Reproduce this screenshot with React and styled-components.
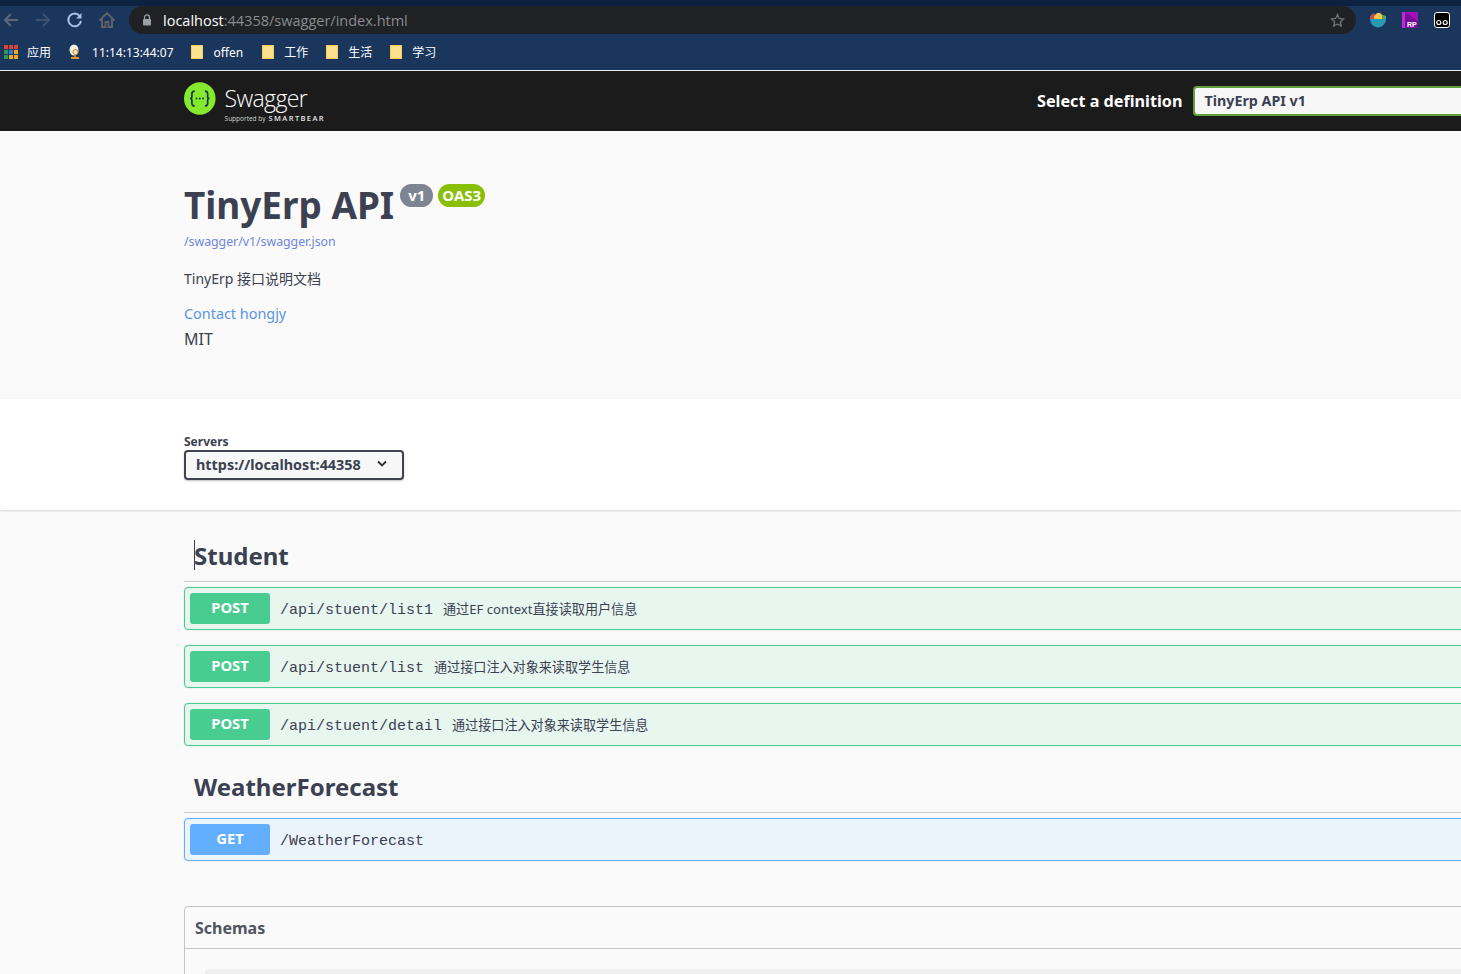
import React from 'react';
import styled, { createGlobalStyle } from 'styled-components';

const sans = '"Noto Sans", "Noto Sans CJK SC", sans-serif';

const GlobalStyle = createGlobalStyle`
  html, body {
    margin: 0;
    padding: 0;
    background: #fafafa;
  }
  body {
    width: 1461px;
    height: 974px;
    overflow: hidden;
    font-family: ${sans};
    color: #3b4151;
  }
`;

const Page = styled.div`
  width: 1461px;
  height: 974px;
  overflow: hidden;
  display: flex;
  flex-direction: column;
`;

const TabStrip = styled.div`
  height: 6px;
  background: #0d2240;
  flex: none;
`;

const Toolbar = styled.div`
  height: 28px;
  padding: 0 5px 0 0;
  background: #1a365d;
  display: flex;
  align-items: center;
  flex: none;
`;

const NavIcons = styled.div`
  width: 129px;
  height: 28px;
  display: flex;
  align-items: center;
  justify-content: space-between;
  padding: 0 13px 0 2px;
  box-sizing: border-box;
  flex: none;
`;

const AddressBar = styled.div`
  width: 1227px;
  height: 28px;
  border-radius: 14px;
  background: #202124;
  display: flex;
  align-items: center;
  padding: 0 11px 0 13px;
  box-sizing: border-box;
  flex: none;
`;

const Url = styled.div`
  margin-left: 11px;
  flex: 1;
  font-family: "Open Sans", sans-serif;
  font-size: 14.5px;
  color: #8a8c90;
  white-space: nowrap;
`;

const UrlHost = styled.span`
  color: #fff;
`;

const Extensions = styled.div`
  display: flex;
  align-items: center;
  gap: 16px;
  margin-left: 14px;
`;

const Bookmarks = styled.div`
  height: 36px;
  background: #1a365d;
  display: flex;
  align-items: center;
  padding-left: 4px;
  flex: none;
  border-bottom: 1px solid #e8eaed;
`;

const Bookmark = styled.div`
  display: flex;
  align-items: center;
  gap: ${p => p.$gap}px;
  margin-right: ${p => p.$after}px;
  font-family: "Noto Sans", "Noto Sans CJK SC", sans-serif;
  font-size: 12px;
  color: #fff;
  white-space: nowrap;
`;

const TopBar = styled.header`
  height: 60px;
  background: #1b1b1b;
  display: flex;
  align-items: center;
  padding-left: 184px;
  flex: none;
`;

const Logo = styled.div`
  width: 141px;
  height: 40px;
  display: flex;
  align-items: flex-start;
  gap: 9px;
  flex: none;
`;

const LogoWords = styled.div`
  display: flex;
  flex-direction: column;
  color: #fff;
  margin-top: 2px;
`;

const LogoName = styled.div`
  font-family: "Open Sans", sans-serif;
  font-weight: 300;
  font-size: 23px;
  line-height: 31px;
  letter-spacing: -0.6px;
`;

const LogoBy = styled.div`
  display: flex;
  align-items: baseline;
  gap: 3px;
  font-family: "Open Sans", sans-serif;
  font-size: 6.5px;
  line-height: 9px;
  color: #d8d8d8;
  white-space: nowrap;
`;

const LogoBrand = styled.span`
  font-size: 7.5px;
  font-weight: 600;
  letter-spacing: 1.4px;
  color: #e8e8e8;
`;

const DefinitionPicker = styled.div`
  margin-left: 712px;
  display: flex;
  align-items: center;
  flex: none;
`;

const PickerLabel = styled.span`
  font-size: 16.2px;
  font-weight: 700;
  color: #fff;
  margin-right: 11px;
  white-space: nowrap;
`;

const PickerBox = styled.div`
  width: 400px;
  height: 30px;
  box-sizing: border-box;
  border: 2px solid #62a03f;
  border-radius: 4px;
  background: #f7f7f7;
  padding-left: 9px;
  font-size: 14.3px;
  font-weight: 700;
  line-height: 25px;
  color: #3b4151;
  white-space: nowrap;
`;

const InfoSection = styled.section`
  height: 268px;
  box-sizing: border-box;
  padding: 47px 0 0 184px;
  background: #fafafa;
  flex: none;
`;

const TitleRow = styled.div`
  display: flex;
  align-items: flex-start;
  height: 56px;
`;

const Title = styled.h2`
  margin: 0;
  font-size: 36.9px;
  line-height: 54px;
  font-weight: 700;
  color: #3b4151;
`;

const Badge = styled.span`
  margin: 6px 0 0 ${p => p.$left}px;
  height: 23px;
  padding: 0 ${p => p.$pad}px;
  border-radius: 12px;
  background: ${p => p.$color};
  color: #fff;
  font-size: 15px;
  font-weight: 700;
  line-height: 23px;
`;

const SpecLink = styled.a`
  display: block;
  margin-top: -1px;
  font-size: 12.3px;
  line-height: 17px;
  color: #6f86e0;
`;

const Description = styled.p`
  margin: 19px 0 0;
  font-size: 14px;
  line-height: 20px;
  color: #3b4151;
`;

const ContactLink = styled.a`
  display: block;
  margin-top: 15px;
  font-size: 14.4px;
  line-height: 20px;
  color: #5a94e8;
`;

const License = styled.div`
  margin-top: 4px;
  font-size: 16px;
  line-height: 22px;
  color: #3b4151;
`;

const ServersSection = styled.section`
  height: 111px;
  box-sizing: border-box;
  background: #fff;
  padding: 34px 0 0 184px;
  box-shadow: 0 1px 2px rgba(0, 0, 0, 0.15);
  position: relative;
  flex: none;
`;

const ServersLabel = styled.div`
  font-size: 12px;
  font-weight: 700;
  line-height: 17px;
  color: #3b4151;
`;

const ServerSelect = styled.div`
  width: 220px;
  height: 30px;
  box-sizing: border-box;
  border: 2px solid #41444e;
  border-radius: 4px;
  background: #f7f7f7;
  box-shadow: 0 1px 2px rgba(0, 0, 0, 0.25);
  display: flex;
  align-items: center;
  justify-content: space-between;
  padding: 0 14px 2px 10px;
  font-size: 14.4px;
  font-weight: 700;
  color: #3b4151;
`;

const Content = styled.main`
  padding: 24px 0 0 184px;
  width: 1500px;
`;

const TagHeader = styled.h3`
  position: relative;
  margin: 0 0 5px;
  height: 48px;
  box-sizing: border-box;
  border-bottom: 1px solid #c9cbce;
  padding: 0 0 0 10px;
  font-size: 24px;
  font-weight: 700;
  line-height: 44px;
  color: #3b4151;
`;

const Caret = styled.span`
  position: absolute;
  left: 10px;
  top: 6px;
  width: 1px;
  height: 30px;
  background: #3b4151;
`;

const OpBlock = styled.div`
  height: 43px;
  box-sizing: border-box;
  border: 1px solid ${p => p.$border};
  border-radius: 4px;
  background: ${p => p.$bg};
  display: flex;
  align-items: center;
  padding-left: 5px;
  margin-bottom: 15px;
  box-shadow: 0 0 2px rgba(0, 0, 0, 0.12);
`;

const Method = styled.span`
  width: 80px;
  height: 31px;
  border-radius: 3px;
  background: ${p => p.$color};
  color: #fff;
  font-size: 14.8px;
  font-weight: 700;
  line-height: 28px;
  text-align: center;
  flex: none;
`;

const OpPath = styled.span`
  margin-left: 10px;
  padding-top: 4px;
  font-family: "Liberation Mono", monospace;
  font-size: 15px;
  color: #3b4151;
  white-space: nowrap;
`;

const OpSummary = styled.span`
  margin-left: 10px;
  font-size: 13.1px;
  color: #3b4151;
  white-space: nowrap;
`;

const TagGap = styled.div`
  height: ${p => p.$h}px;
`;

const SchemasPanel = styled.section`
  height: 120px;
  box-sizing: border-box;
  border: 1px solid #c4c5c8;
  border-radius: 4px;
`;

const SchemasHeader = styled.div`
  height: 42px;
  box-sizing: border-box;
  padding-left: 10px;
  border-bottom: 1px solid #c4c5c8;
  font-size: 16px;
  font-weight: 700;
  line-height: 42px;
  color: #505460;
`;

const SchemaRow = styled.div`
  margin: 20px 0 0 20px;
  height: 40px;
  border-radius: 4px;
  background: #eeeeee;
`;

const BackIcon = () => (
  <svg width="18" height="18" viewBox="0 0 18 18" fill="none" stroke="#5f6873" strokeWidth="2">
    <path d="M16 9H3M9 3L3 9l6 6" />
  </svg>
);

const ForwardIcon = () => (
  <svg width="18" height="18" viewBox="0 0 18 18" fill="none" stroke="#3f5270" strokeWidth="2">
    <path d="M2 9h13M9 3l6 6-6 6" />
  </svg>
);

const ReloadIcon = () => (
  <svg width="18" height="18" viewBox="0 0 18 18" fill="none">
    <path d="M14 5.200A6.400 6.400 0 1 0 15 10" stroke="#a9c1e6" strokeWidth="2" />
    <path d="M15.500 2v5.400h-5.400z" fill="#a9c1e6" />
  </svg>
);

const HomeIcon = () => (
  <svg width="18" height="18" viewBox="0 0 18 18" fill="none" stroke="#5f6368" strokeWidth="1.800">
    <path d="M1.500 9.500L9 2l7.500 7.500M4 8v8h3.500v-5h3v5H14V8" />
  </svg>
);

const LockIcon = () => (
  <svg width="10" height="12" viewBox="0 0 10 12">
    <path d="M2.500 5V3.400a2.500 2.500 0 0 1 5 0V5" fill="none" stroke="#9aa0a6" strokeWidth="1.300" />
    <rect x="1" y="5" width="8" height="6.500" rx="1" fill="#9aa0a6" />
  </svg>
);

const StarIcon = () => (
  <svg width="15" height="15" viewBox="0 0 24 24" fill="none" stroke="#6f7276" strokeWidth="2.200">
    <path d="M12 2.500l2.900 6.200 6.800.8-5 4.600 1.300 6.700L12 17.500l-6 3.300 1.300-6.700-5-4.600 6.800-.8z" />
  </svg>
);

const PieExtension = () => (
  <svg width="16" height="16" viewBox="0 0 16 16">
    <path d="M0 7h16a8 8.500 0 0 1-16 0z" fill="#2b9ab0" />
    <path d="M0 7V4l4-3 3 6z" fill="#c0504d" />
    <path d="M4 7a4.500 6 0 0 1 8-4l1 4z" fill="#f2c94c" />
    <path d="M12 2.400L16 4v3h-4z" fill="#57a55a" />
  </svg>
);

const RpExtension = () => (
  <svg width="16" height="16" viewBox="0 0 16 16">
    <rect width="16" height="16" fill="#a312b8" />
    <rect width="3" height="16" fill="#c02ad6" />
    <path d="M3 0l13 9v7H3z" fill="#7a0c9c" />
    <text x="5" y="14.500" fontSize="7" fontWeight="700" fill="#fff" fontFamily="Liberation Sans, sans-serif">RP</text>
  </svg>
);

const GlassesExtension = () => (
  <svg width="16" height="16" viewBox="0 0 16 16">
    <rect x="0.500" y="0.500" width="15" height="15" rx="2.500" fill="#000" stroke="#fff" />
    <circle cx="4.800" cy="10.500" r="2" fill="none" stroke="#fff" strokeWidth="1.200" />
    <circle cx="11.200" cy="10.500" r="2" fill="none" stroke="#fff" strokeWidth="1.200" />
  </svg>
);

const AppsIcon = () => {
  const colors = ['#dc4437', '#dc4437', '#dc4437', '#2e9a58', '#2f7fd6', '#f4a81c', '#2e9a58', '#f4a81c', '#f4a81c'];
  return (
    <svg width="14" height="14" viewBox="0 0 14 14">
      {colors.map((c, i) => (
        <rect key={i} x={(i % 3) * 5} y={Math.floor(i / 3) * 5} width="4" height="4" fill={c} />
      ))}
    </svg>
  );
};

const EggIcon = () => (
  <svg width="14" height="16" viewBox="0 0 14 16">
    <ellipse cx="6" cy="6" rx="4.500" ry="5.500" fill="#f0ece2" />
    <circle cx="7.500" cy="8" r="2.600" fill="#f3e3bf" stroke="#c98a2c" strokeWidth="1" />
    <path d="M7 9.500l-1 3.500h2z" fill="#d9952f" />
    <rect x="3" y="13" width="8" height="2" fill="#e0982a" />
  </svg>
);

const FolderIcon = () => (
  <svg width="12" height="14" viewBox="0 0 12 14">
    <path d="M0 0h12v14H0z" fill="#fbe08e" />
    <path d="M0 0h12v14H0z" fill="none" stroke="#f5c84c" strokeWidth="1.400" />
  </svg>
);

const SwaggerMark = () => (
  <svg width="34" height="35" viewBox="0 0 34 35">
    <ellipse cx="17" cy="17.500" rx="17" ry="17.500" fill="#85ea2d" />
    <path
      d="M11.500 9.500c-2.500 0-3 1-3 3v3c0 1.400-.8 2-2 2 1.200 0 2 .6 2 2v3c0 2 .5 3 3 3M22.500 9.500c2.500 0 3 1 3 3v3c0 1.400.8 2 2 2-1.200 0-2 .6-2 2v3c0 2-.5 3-3 3"
      fill="none"
      stroke="#173647"
      strokeWidth="1.800"
    />
    <circle cx="13.500" cy="17.500" r="1" fill="#173647" />
    <circle cx="17" cy="17.500" r="1" fill="#173647" />
    <circle cx="20.500" cy="17.500" r="1" fill="#173647" />
  </svg>
);

const Chevron = () => (
  <svg width="12" height="8" viewBox="0 0 12 8" fill="none" stroke="#2b2f3a" strokeWidth="1.800">
    <path d="M2 1.500l4 4 4-4" />
  </svg>
);

const bookmarks = [
  { icon: <AppsIcon />, label: '应用', gap: 9, after: 17 },
  { icon: <EggIcon />, label: '11:14:13:44:07', gap: 10, after: 17 },
  { icon: <FolderIcon />, label: 'offen', gap: 11, after: 19 },
  { icon: <FolderIcon />, label: '工作', gap: 10, after: 18 },
  { icon: <FolderIcon />, label: '生活', gap: 10, after: 18 },
  { icon: <FolderIcon />, label: '学习', gap: 10, after: 18 },
];

const POST = { color: '#49cc90', border: '#49cc90', bg: '#e8f6f0' };
const GET = { color: '#61affe', border: '#61affe', bg: '#ebf3fb' };

const studentOps = [
  { method: 'POST', path: '/api/stuent/list1', summary: '通过EF context直接读取用户信息' },
  { method: 'POST', path: '/api/stuent/list', summary: '通过接口注入对象来读取学生信息' },
  { method: 'POST', path: '/api/stuent/detail', summary: '通过接口注入对象来读取学生信息' },
];

const Operation = ({ method, path, summary, look }) => (
  <OpBlock $border={look.border} $bg={look.bg}>
    <Method $color={look.color}>{method}</Method>
    <OpPath>{path}</OpPath>
    {summary && <OpSummary>{summary}</OpSummary>}
  </OpBlock>
);

export default function App() {
  return (
    <Page>
      <GlobalStyle />
      <TabStrip />
      <Toolbar>
        <NavIcons>
          <BackIcon />
          <ForwardIcon />
          <ReloadIcon />
          <HomeIcon />
        </NavIcons>
        <AddressBar>
          <LockIcon />
          <Url><UrlHost>localhost</UrlHost>:44358/swagger/index.html</Url>
          <StarIcon />
        </AddressBar>
        <Extensions>
          <PieExtension />
          <RpExtension />
          <GlassesExtension />
        </Extensions>
      </Toolbar>
      <Bookmarks>
        {bookmarks.map(b => (
          <Bookmark key={b.label} $gap={b.gap} $after={b.after}>
            {b.icon}
            <span>{b.label}</span>
          </Bookmark>
        ))}
      </Bookmarks>

      <TopBar>
        <Logo>
          <SwaggerMark />
          <LogoWords>
            <LogoName>Swagger</LogoName>
            <LogoBy>Supported by <LogoBrand>SMARTBEAR</LogoBrand></LogoBy>
          </LogoWords>
        </Logo>
        <DefinitionPicker>
          <PickerLabel>Select a definition</PickerLabel>
          <PickerBox>TinyErp API v1</PickerBox>
        </DefinitionPicker>
      </TopBar>

      <InfoSection>
        <TitleRow>
          <Title>TinyErp API</Title>
          <Badge $left={6} $pad={8} $color="#7d8492">v1</Badge>
          <Badge $left={5} $pad={4} $color="#89bf04">OAS3</Badge>
        </TitleRow>
        <SpecLink>/swagger/v1/swagger.json</SpecLink>
        <Description>TinyErp 接口说明文档</Description>
        <ContactLink>Contact hongjy</ContactLink>
        <License>MIT</License>
      </InfoSection>

      <ServersSection>
        <ServersLabel>Servers</ServersLabel>
        <ServerSelect>
          https://localhost:44358
          <Chevron />
        </ServerSelect>
      </ServersSection>

      <Content>
        <TagHeader><Caret />Student</TagHeader>
        {studentOps.map(op => (
          <Operation key={op.path} {...op} look={POST} />
        ))}
        <TagGap $h={4} />
        <TagHeader>WeatherForecast</TagHeader>
        <Operation method="GET" path="/WeatherForecast" look={GET} />
        <TagGap $h={30} />
        <SchemasPanel>
          <SchemasHeader>Schemas</SchemasHeader>
          <SchemaRow />
        </SchemasPanel>
      </Content>
    </Page>
  );
}
